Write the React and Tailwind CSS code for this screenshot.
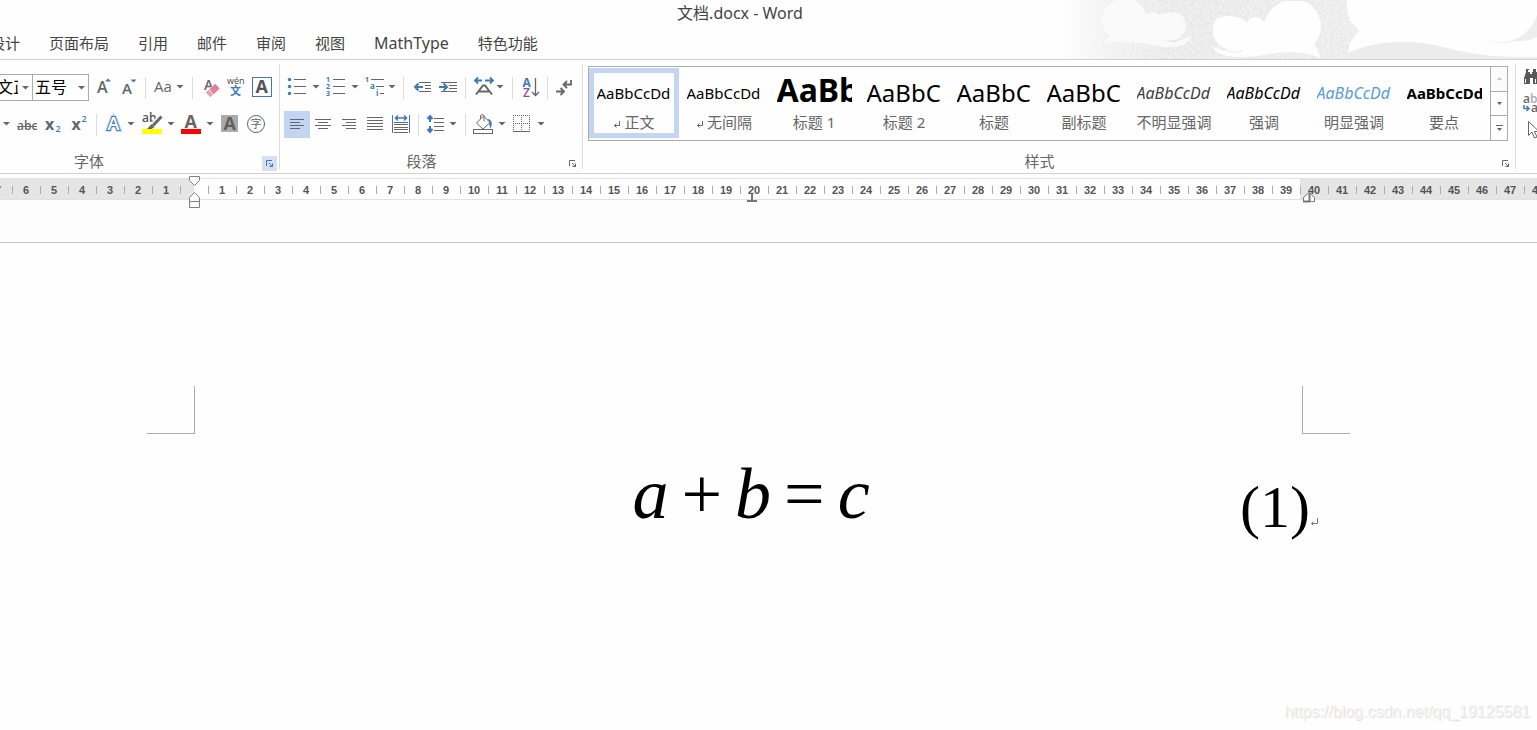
import React from "react";

const G = "#666666";
const B = "#3f79b7";
const UI = "Open Sans, Noto Sans CJK SC, sans-serif";

/* Toolbar glyph: drawn in ribbon coordinates, cropped to its own slot. */
function Tool({ label, x, y, w, active, children }) {
  return (
    <button
      type="button"
      aria-label={label}
      title={label}
      className={"shrink-0 overflow-hidden " + (active ? "bg-[#c2d5f2]" : "hover:bg-[#d5e1f2]")}
    >
      <svg width={w} height={27} viewBox={`${x} ${y} ${w} 27`} fill="none" stroke="none">
        {children}
      </svg>
    </button>
  );
}

function Caret({ x, y = 86 }) {
  return <path d={`M${x - 3.5} ${y - 1}h7l-3.5 3.6z`} fill={G} />;
}

function Letter({ x, y, s = 16, c = G, w = 600, f = UI, children, ...rest }) {
  return (
    <text x={x} y={y} fontSize={s} fill={c} fontWeight={w} fontFamily={f} {...rest}>
      {children}
    </text>
  );
}

function Sep({ className }) {
  return (
    <div className={"flex h-[27px] shrink-0 items-center justify-center " + className}>
      <div className="h-[22px] w-px bg-[#dcdcdc]" />
    </div>
  );
}

function Lines({ rows, c = G, w = 1 }) {
  return rows.map(([x1, x2, y]) => (
    <path key={`${x1}-${y}`} d={`M${x1} ${y}H${x2}`} stroke={c} strokeWidth={w} />
  ));
}

function Launcher({ active }) {
  return (
    <button
      type="button"
      aria-label="对话框启动器"
      className={"h-[15px] w-[15px] shrink-0 " + (active ? "bg-[#d5e1f2]" : "")}
    >
      <svg width="15" height="15" viewBox="0 0 15 15" fill="none" stroke={active ? B : G}>
        <path d="M4.500 10V4.500H10" />
        <path d="M7 7l3 3M10.500 7.500v3h-3" />
        <path d="M8.500 10.500h2v-2z" fill={active ? B : G} />
      </svg>
    </button>
  );
}

function GroupFooter({ children, active, className = "" }) {
  return (
    <div className="-mb-0.5 flex h-[15px] items-start pr-0.5">
      <div className={"-mt-0.5 flex-1 pr-0.5 text-center leading-[15px] text-[#666666] " + className}>{children}</div>
      <Launcher active={active} />
    </div>
  );
}

const TABS = [
  { name: "设计" },
  { name: "页面布局" },
  { name: "引用" },
  { name: "邮件" },
  { name: "审阅" },
  { name: "视图" },
  { name: "MathType", latin: true },
  { name: "特色功能" },
];

function Clouds() {
  return (
    <svg
      className="absolute top-0 right-0"
      width="477"
      height="59"
      viewBox="1060 0 477 59"
      aria-hidden="true"
    >
      <defs>
        <linearGradient id="sky" x1="0" x2="1" y1="0" y2="0">
          <stop offset="0" stopColor="#e9e9e9" stopOpacity="0" />
          <stop offset="0.1" stopColor="#e9e9e9" stopOpacity="0.7" />
          <stop offset="0.22" stopColor="#e6e6e6" />
          <stop offset="0.6" stopColor="#e8e8e8" />
          <stop offset="1" stopColor="#e6e6e6" />
        </linearGradient>
        <filter id="grain" x="0" y="0" width="100%" height="100%">
          <feTurbulence type="fractalNoise" baseFrequency="0.4" numOctaves="2" seed="4" />
          <feColorMatrix values="0 0 0 0 1  0 0 0 0 1  0 0 0 0 1  1 0 0 0 -0.25" />
          <feComposite in2="SourceGraphic" operator="in" />
        </filter>
      </defs>
      <rect x="1060" width="477" height="59" fill="url(#sky)" />
      <rect x="1060" width="477" height="59" fill="#fff" filter="url(#grain)" />
      <path
        d="M1110 36C1099 26 1098 8 1117 0h17c6 3 10 9 12 15 5-4 11-3 13 0 10-5 26-4 27 9 0 9-5 14-11 17 6-1 12-3 16-5-3 11-18 13-34 10-18-3-36-8-54-2l7-8z"
        fill="#fafafa"
      />
      <path d="M1163 40c7 2 14 0 18-2-4 5-12 5-18 2z" fill="#e2e2e2" />
      <path
        d="M1213 46c6 4 11 5 15 3-14-2-18-19-13-28 5-7 25-7 32 2 2-8 15-8 17 0 3-10 10-18 20-22h20c14 5 22 25 13 39l-3 5c3 4 6 9 6 13-18-8-38-6-56-3-22 4-50 3-51-9z"
        fill="#fefefe"
      />
      <path d="M1220 48c7 4 17 5 22 2v1c-7 3-16 1-22-3z" fill="#e0e0e0" />
      <path
        d="M1347 0h190v59c-35 1-62-2-90-9-34-9-68-9-99 5 0-10 4-17 12-25-9-5-14-14-13-30z"
        fill="#fefefe"
      />
      <path d="M1484 38c8 5 22 6 31 1 10-4 18-12 22-24v22c-8 4-16 4-22 4-10 3-23 3-31-3z" fill="#eeeeee" />
      <path d="M1348 53c31-14 65-14 99-5 28 7 55 10 90 9v2H1348z" fill="#ececec" />
    </svg>
  );
}

function FontGroup() {
  return (
    <section aria-label="字体" className="flex w-[280px] shrink-0 flex-col border-r border-[#dcdcdc] pt-2.5">
      <div className="flex">
        <div className="relative h-[27px] w-[33px] shrink-0 overflow-hidden">
          <select
            aria-label="字体名称"
            className="-ml-[67px] h-[27px] w-[100px] appearance-none border border-[#ababab] bg-white pr-[14px] pb-0.5 pl-1.5 text-base text-black"
          >
            <option>宋体 (中文正文)</option>
          </select>
          <svg className="pointer-events-none absolute top-3 right-1" width="7" height="4">
            <path d="M0 0h7L3.500 3.600z" fill={G} />
          </svg>
        </div>
        <div className="relative -ml-px h-[27px] w-[57px] shrink-0">
          <select
            aria-label="字号"
            className="h-[27px] w-full appearance-none border border-[#ababab] bg-white pb-0.5 pl-0.5 text-base text-black"
          >
            <option>五号</option>
          </select>
          <svg className="pointer-events-none absolute top-3 right-1" width="7" height="4">
            <path d="M0 0h7L3.500 3.600z" fill={G} />
          </svg>
        </div>
        <Tool label="增大字号" x={89} y={74} w={28}>
          <Letter x={97} y={93}>A</Letter>
          <path d="M105 81.500h6l-3-3z" fill={B} />
        </Tool>
        <Tool label="缩小字号" x={117} y={74} w={24}>
          <Letter x={122} y={94} s={15}>A</Letter>
          <path d="M130.500 79.500h6l-3 3z" fill={B} />
        </Tool>
        <Sep className="w-[9px]" />
        <Tool label="更改大小写" x={150} y={74} w={38}>
          <Letter x={154} y={92} s={15} w={500}>Aa</Letter>
          <Caret x={180} />
        </Tool>
        <Sep className="w-[9px]" />
        <Tool label="清除格式" x={197} y={74} w={25}>
          <Letter x={204} y={90} s={14}>A</Letter>
          <g transform="rotate(-43 213 90)">
            <rect x="205.500" y="86.500" width="14" height="7.500" rx="1" fill="#fff" />
            <path d="M206 87h4v6.500h-4z" fill="#e8a0b0" />
            <path d="M210.700 87h8.300v6.500h-8.300z" fill="#e57f95" />
          </g>
        </Tool>
        <Tool label="拼音指南" x={222} y={74} w={26}>
          <Letter x={227} y={84} s={9} w={500} c="#444">wén</Letter>
          <Letter x={230} y={95} s={11} c={B}>文</Letter>
        </Tool>
        <Tool label="字符边框" x={248} y={74} w={28}>
          <rect x="252.500" y="77.500" width="19" height="19" stroke={B} fill="#fff" />
          <Letter x={255.500} y={93} s={18} w={700} c="#555">A</Letter>
        </Tool>
      </div>
      <div className="mt-2.5 flex">
        <Tool label="下划线" x={0} y={111} w={13}>
          <Caret x={6.500} y={123} />
        </Tool>
        <Tool label="删除线" x={13} y={111} w={27}>
          <Letter x={17} y={130} s={12}>abc</Letter>
          <path d="M17 126.500h20" stroke={G} />
        </Tool>
        <Tool label="下标" x={40} y={111} w={27}>
          <Letter x={45} y={130} w={700}>x</Letter>
          <Letter x={55.500} y={132} s={9} c={B}>2</Letter>
        </Tool>
        <Tool label="上标" x={67} y={111} w={25}>
          <Letter x={71.500} y={130} w={700}>x</Letter>
          <Letter x={81.500} y={122} s={9} c={B}>2</Letter>
        </Tool>
        <Sep className="w-[9px]" />
        <Tool label="文本效果" x={101} y={111} w={37}>
          <Letter x={107.500} y={130} s={18} w={600} c="#fff" stroke="#c9def3" strokeWidth="4">A</Letter>
          <Letter x={107.500} y={130} s={18} w={600} c="#fff" stroke={B} strokeWidth="2">A</Letter>
          <Letter x={107.500} y={130} s={18} w={600} c="#fff">A</Letter>
          <Caret x={131} y={123} />
        </Tool>
        <Tool label="突出显示" x={138} y={111} w={39}>
          <Letter x={142} y={122} s={12} c="#555">ab</Letter>
          <path d="M161 116l-8.500 9.500" stroke="#fff" strokeWidth="5" />
          <path d="M161.500 116.500l-8.500 9" stroke={G} strokeWidth="3" />
          <path d="M151.500 124l3 3-3 2h-4.500z" fill={G} />
          <path d="M142 129h20v5h-20z" fill="#ffff00" />
          <Caret x={171} y={123} />
        </Tool>
        <Tool label="字体颜色" x={177} y={111} w={40}>
          <Letter x={184.500} y={127.500} s={18} w={700} c="#666">A</Letter>
          <path d="M181 129h20v5h-20z" fill="#ff0000" />
          <Caret x={210} y={123} />
        </Tool>
        <Tool label="字符底纹" x={217} y={111} w={26}>
          <path d="M221 115h17v17h-17z" fill="#ababab" />
          <Letter x={223.500} y={130} s={18} w={700} c="#606060">A</Letter>
        </Tool>
        <Tool label="带圈字符" x={243} y={111} w={27}>
          <circle cx="256" cy="124" r="8.500" stroke={G} />
          <Letter x={250.500} y={128} s={11} w={400}>字</Letter>
        </Tool>
      </div>
      <div className="mt-[18px]">
        <GroupFooter active className="mr-[82px]">字体</GroupFooter>
      </div>
    </section>
  );
}

function ParagraphGroup() {
  return (
    <section aria-label="段落" className="flex w-[303px] shrink-0 flex-col border-r border-[#dcdcdc] pt-2.5">
      <div className="flex pl-1">
        <Tool label="项目符号" x={284} y={74} w={38}>
          {[79.5, 86.5, 93.5].map((y) => (
            <circle key={y} cx="289.500" cy={y} r="1.700" fill={B} />
          ))}
          <Lines rows={[[294, 306, 79.5], [294, 306, 86.5], [294, 306, 93.5]]} />
          <Caret x={316} />
        </Tool>
        <Tool label="编号" x={322} y={74} w={39}>
          <Letter x={326} y={82} s={7} w={700} c={B}>1</Letter>
          <Letter x={326} y={89} s={7} w={700} c={B}>2</Letter>
          <Letter x={326} y={96} s={7} w={700} c={B}>3</Letter>
          <Lines rows={[[333, 345, 79.5], [333, 345, 86.5], [333, 345, 93.5]]} />
          <Caret x={355} />
        </Tool>
        <Tool label="多级列表" x={361} y={74} w={38}>
          <Letter x={365} y={82} s={7} w={700} c={B}>1</Letter>
          <Letter x={370} y={89} s={8} w={700} c={B}>a</Letter>
          <Letter x={376} y={96} s={8} w={700} c={B}>i</Letter>
          <Lines rows={[[371, 384, 79.5], [376, 384, 86.5], [380, 384, 93.5]]} />
          <Caret x={392} />
        </Tool>
        <Sep className="w-[9px]" />
        <Tool label="减少缩进" x={408} y={74} w={27}>
          <Lines rows={[[419, 431, 82.5], [425, 431, 85.5], [425, 431, 88.5], [419, 431, 91.5]]} />
          <path d="M423 87h-7M418.500 83.500L415 87l3.500 3.500" stroke={B} strokeWidth="2" />
        </Tool>
        <Tool label="增加缩进" x={435} y={74} w={26}>
          <Lines rows={[[441, 457, 82.5], [449, 457, 85.5], [449, 457, 88.5], [441, 457, 91.5]]} />
          <path d="M439 87h7M443.500 83.500L447 87l-3.500 3.500" stroke={B} strokeWidth="2" />
        </Tool>
        <Sep className="w-[9px]" />
        <Tool label="中文版式" x={470} y={74} w={38}>
          <path d="M476 94.500l7-9h2l7 9M478.500 91.500h11" stroke={G} strokeWidth="2" />
          <path d="M482 80.500h-6M478 77.500l-3 3 3 3M485 80.500h7M490 77.500l3 3-3 3" stroke={B} strokeWidth="1.800" />
          <Caret x={500} />
        </Tool>
        <Sep className="w-[9px]" />
        <Tool label="排序" x={517} y={74} w={26}>
          <Letter x={522.500} y={86.500} s={12} w={700} c={B}>A</Letter>
          <Letter x={523} y={96.500} s={12} w={600} c="#8650a8">Z</Letter>
          <path d="M535.500 78v17.500M532 92l3.500 3.500 3.500-3.500" stroke={G} strokeWidth="1.300" />
        </Tool>
        <Sep className="w-[9px]" />
        <Tool label="显示编辑标记" x={552} y={74} w={26}>
          <path d="M571 80v4.500h-7M567 81l-3.500 3.500L567 88" stroke={G} strokeWidth="1.800" />
          <path d="M556 91.500h7M560.500 88l3.500 3.500-3.500 3.500" stroke={G} strokeWidth="1.800" />
        </Tool>
      </div>
      <div className="mt-2.5 flex pl-1">
        <Tool label="左对齐" x={284} y={111} w={26} active>
          <Lines rows={[[290, 304, 119.5], [290, 300, 122.5], [290, 304, 125.5], [290, 300, 128.5]]} />
        </Tool>
        <Tool label="居中" x={310} y={111} w={26}>
          <Lines rows={[[315, 331, 119.5], [318, 328, 122.5], [315, 331, 125.5], [318, 328, 128.5]]} />
        </Tool>
        <Tool label="右对齐" x={336} y={111} w={26}>
          <Lines rows={[[342, 356, 119.5], [346, 356, 122.5], [342, 356, 125.5], [346, 356, 128.5]]} />
        </Tool>
        <Tool label="两端对齐" x={362} y={111} w={26}>
          <Lines rows={[[367, 383, 117.5], [367, 383, 120.5], [367, 383, 123.5], [367, 383, 126.5], [367, 383, 129.5]]} />
        </Tool>
        <Tool label="分散对齐" x={388} y={111} w={26}>
          <path d="M392.500 115v18M409.500 115v18" stroke={B} />
          <path d="M395 118h12M398 115.500l-2.500 2.500 2.500 2.500M404 115.500l2.500 2.500-2.500 2.500" stroke={B} strokeWidth="1.600" />
          <Lines rows={[[394, 408, 122.5], [394, 408, 124.5], [394, 408, 127.5], [394, 408, 129.5], [394, 408, 132.5]]} />
        </Tool>
        <Sep className="w-[9px]" />
        <Tool label="行距" x={423} y={111} w={38}>
          <path d="M430 122v-5.500M427.500 119l2.500-3 2.500 3M430 126v5.500M427.500 129l2.500 3 2.500-3" stroke={B} strokeWidth="2" />
          <Lines rows={[[434, 444, 118.5], [434, 444, 122.5], [434, 444, 126.5], [434, 444, 130.5]]} />
          <Caret x={453} y={123} />
        </Tool>
        <Sep className="w-[9px]" />
        <Tool label="底纹" x={470} y={111} w={38}>
          <rect x="473.500" y="129.500" width="19" height="4" stroke={G} fill="#fff" />
          <path d="M476.500 123l7-7 6.500 6.500-7 6.500z" stroke={G} fill="#fff" />
          <path d="M480.500 119v-3.500q1.500-2 3.500 0v6" stroke={G} />
          <path d="M487 119c5 0 6 5 3.500 9.500-1-2-1.500-5-1-7z" fill={B} />
          <Caret x={502} y={123} />
        </Tool>
        <Tool label="边框" x={508} y={111} w={40}>
          <path d="M513.500 115v16M521.500 115v16M529.500 115v16M513 115.500h17M513 123.500h17" stroke={G} strokeDasharray="1 1" />
          <path d="M513 131.500h17" stroke={G} />
          <Caret x={541} y={123} />
        </Tool>
      </div>
      <div className="mt-[18px]">
        <GroupFooter>段落</GroupFooter>
      </div>
    </section>
  );
}

const SMALL = "text-[15px] leading-10";
const LARGE = "text-2xl leading-10";
const STYLES = [
  { name: "正文", mark: true, text: "AaBbCcDd", look: SMALL + " text-black", selected: true },
  { name: "无间隔", mark: true, text: "AaBbCcDd", look: SMALL + " text-black" },
  { name: "标题 1", text: "AaBb", look: "text-[32px] leading-[34px] font-bold text-black" },
  { name: "标题 2", text: "AaBbC", look: LARGE + " text-black" },
  { name: "标题", text: "AaBbC", look: LARGE + " text-black" },
  { name: "副标题", text: "AaBbC", look: LARGE + " text-black" },
  { name: "不明显强调", text: "AaBbCcDd", look: "text-base leading-10 text-[#404040] italic" },
  { name: "强调", text: "AaBbCcDd", look: "text-base leading-10 text-black italic" },
  { name: "明显强调", text: "AaBbCcDd", look: "text-base leading-10 text-[#5b9bd5] italic" },
  { name: "要点", text: "AaBbCcDd", look: SMALL + " text-black font-bold" },
];

function StyleCell({ item }) {
  return (
    <button
      type="button"
      className={
        "flex h-[70px] w-[90px] shrink-0 flex-col items-center border-[5px] " +
        (item.selected ? "border-[#c2d5f2]" : "border-transparent")
      }
    >
      <span className="flex h-10 w-[75px] items-start overflow-hidden">
        <span className={"whitespace-nowrap " + item.look}>{item.text}</span>
      </span>
      <span className="flex h-[18px] items-center gap-1 leading-[18px] whitespace-nowrap text-[#666666]">
        {item.mark && (
          <svg className="mt-1" width="7" height="7" viewBox="0 0 7 7" fill="none" stroke={G}>
            <path d="M6.500 0v4.500h-5M3.500 2.500l-2 2 2 2" />
          </svg>
        )}
        {item.name}
      </span>
    </button>
  );
}

function StylesGroup() {
  return (
    <section aria-label="样式" className="flex min-w-0 flex-1 flex-col border-r border-[#dcdcdc] pt-0.5">
      <div className="mr-[7px] ml-[5px] flex h-[75px] border border-[#ababab]">
        <div className="flex min-w-0 flex-1 overflow-hidden pt-px">
          {STYLES.map((s) => (
            <StyleCell key={s.name} item={s} />
          ))}
        </div>
        <div className="flex w-[17px] shrink-0 flex-col divide-y divide-[#ababab] border-l border-[#ababab]">
          <button type="button" aria-label="上一行" className="flex flex-1 items-center justify-center bg-[#fbfbfb]">
            <svg width="5" height="3"><path d="M0 3h5L2.500 0z" fill="#c6c6c6" /></svg>
          </button>
          <button type="button" aria-label="下一行" className="flex flex-1 items-center justify-center">
            <svg width="5" height="3"><path d="M0 0h5L2.500 3z" fill={G} /></svg>
          </button>
          <button type="button" aria-label="其他" className="flex flex-1 items-center justify-center">
            <svg width="7" height="7"><path d="M0 0h7v1H0zM1 3h5L3.500 6z" fill={G} /></svg>
          </button>
        </div>
      </div>
      <div className="mt-[15px]">
        <GroupFooter>样式</GroupFooter>
      </div>
    </section>
  );
}

function EditGroup() {
  return (
    <section aria-label="编辑" className="flex w-[21px] shrink-0 flex-col overflow-hidden">
      <Tool label="查找" x={1516} y={64} w={28}>
        <path d="M1526 69h3v3h1v2h2v-2h1v-3h3v3h1l1 12h-5v-6h-3v6h-6v-6l2-6z" fill="#595959" />
        <path d="M1525.500 79v4M1528.500 70v2M1535.500 79v4" stroke="#fff" />
      </Tool>
      <Tool label="替换" x={1516} y={91} w={28}>
        <Letter x={1523} y={103} s={12} c={G}>a</Letter>
        <Letter x={1530} y={103} s={12} c="#ababab">b</Letter>
        <path d="M1524 105v3.500h5M1526.500 106l2.500 2.500-2.500 2.500" stroke={B} strokeWidth="1.500" />
        <Letter x={1531} y={112} s={12} c={G}>ac</Letter>
      </Tool>
      <Tool label="选择" x={1516} y={118} w={28}>
        <path d="M1528.500 121.500v14l3.500-3.500 2.500 6 2.500-1-2.500-5.500h4.500z" stroke={G} fill="#fff" />
      </Tool>
    </section>
  );
}

const MARKS = Array.from({ length: 56 }, (_, i) => i - 7);

function Ruler() {
  return (
    <div className="relative border-b border-[#c6c6c6] bg-[#fdfdfd] pt-1 pb-[42px]">
      <div className="flex h-[22px] overflow-hidden border-y border-[#e1e1e1] bg-white">
        <div className="-ml-4 flex min-w-0 flex-1">
          {MARKS.map((n) => (
            <div
              key={n}
              className={
                "flex w-7 shrink-0 items-center " + (n < 0 || n >= 40 ? "bg-[#e5e5e5]" : "bg-white")
              }
            >
              <div className={"flex h-full w-3.5 shrink-0 items-center pt-px " + (n === 0 ? "bg-[#e5e5e5]" : "")}>
                <div className="h-2 w-px bg-[#ababab]" />
              </div>
              {n !== 0 && (
                <span className="-ml-3.5 w-7 pt-0.5 text-center font-['Liberation_Sans'] text-[11px] leading-[18px] font-bold text-[#555555]">
                  {Math.abs(n)}
                </span>
              )}
            </div>
          ))}
          <div className="flex-1 bg-[#e5e5e5]" />
        </div>
      </div>
      <svg className="absolute top-0.5 left-[188px]" width="13" height="33" fill="#fff" stroke="#808080">
        <path d="M1.500 .5h10v4l-5 5-5-5z" />
        <path d="M1.500 25.500v-4l5-5 5 5v4zM1.500 25.500h10v6h-10z" />
      </svg>
      <svg className="absolute top-[19px] left-[746px]" width="12" height="10" fill="#777">
        <path d="M5 0h2v7h4v2H1V7h4z" />
      </svg>
      <svg className="absolute top-4 left-[1302px]" width="14" height="13" fill="#fff" stroke="#777">
        <path d="M1.500 11.500v-4l5.500-5 5.500 5v4z" />
        <path d="M7.500 3v8.500" strokeWidth="2" />
        <path d="M1 11.500h7" strokeWidth="2" />
      </svg>
    </div>
  );
}

export default function App() {
  return (
    <div className="flex min-h-screen flex-col overflow-hidden bg-[#fefefe] font-['Noto_Sans','Noto_Sans_CJK_SC',sans-serif] text-[15px] text-[#444444]">
      <header className="relative border-b border-[#d0d0d0]">
        <Clouds />
        <h1 className="relative h-7 pr-[57px] text-center text-base leading-[26px]">文档.docx - Word</h1>
        <nav className="relative -ml-[10px] flex h-[31px] gap-[29px] whitespace-nowrap">
          {TABS.map((t) => (
            <a key={t.name} href="#" className={"leading-[30px] " + (t.latin ? "text-base" : "")}>
              {t.name}
            </a>
          ))}
        </nav>
      </header>

      <div className="flex border-b border-[#d0d0d0] py-1">
        <FontGroup />
        <ParagraphGroup />
        <StylesGroup />
        <EditGroup />
      </div>

      <Ruler />

      <main className="flex flex-1 flex-col pt-[143px]">
        <div className="flex justify-between pr-[187px] pl-[147px]">
          <div className="h-12 w-12 border-r border-b border-[#ababab]" />
          <div className="h-12 w-12 border-b border-l border-[#ababab]" />
        </div>
        <div className="grid grid-cols-[1fr_auto_1fr] pt-[18px] pr-[219px] pl-[184px] font-['Liberation_Serif',serif] text-black">
          <div />
          <div className="flex gap-[13px] text-[72px] leading-[84px]">
            <i>a</i>
            <span>+</span>
            <i>b</i>
            <span>=</span>
            <i>c</i>
          </div>
          <div className="flex items-start justify-end pt-[21px] text-[60px] leading-[68px]">
            <span>(1)</span>
            <svg className="mt-[45px] shrink-0" width="8" height="9" viewBox="0 0 8 9" fill="none" stroke="#777">
              <path d="M7.500 0v5.500h-6M3.500 3.500l-2 2 2 2" />
            </svg>
          </div>
        </div>
        <div className="mt-auto pr-[7px] pb-[6px] text-right font-['Liberation_Sans',sans-serif] text-base text-[#f4f4f4] [text-shadow:1px_1px_1px_#dcdcdc]">
          https://blog.csdn.net/qq_19125581
        </div>
      </main>
    </div>
  );
}
